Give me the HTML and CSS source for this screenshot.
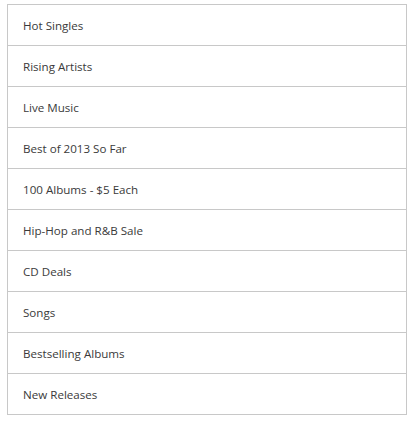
FILE: index.html
```html
<!DOCTYPE html>
<html>
<head>
<meta charset="utf-8">
<link rel="stylesheet" href="styles.css">
</head>
<body>
<ul class="list">
  <li class="item">Hot Singles</li>
  <li class="item">Rising Artists</li>
  <li class="item">Live Music</li>
  <li class="item">Best of 2013 So Far</li>
  <li class="item">100 Albums - $5 Each</li>
  <li class="item">Hip-Hop and R&amp;B Sale</li>
  <li class="item">CD Deals</li>
  <li class="item">Songs</li>
  <li class="item">Bestselling Albums</li>
  <li class="item">New Releases</li>
</ul>
</body>
</html>
```
FILE: styles.css
```css
html, body {
  margin: 0;
  padding: 0;
  background: #fff;
}
.list {
  list-style: none;
  margin: 4px 0 0 7px;
  padding: 0;
  width: 398px;
  border: 1px solid #c8c8c8;
  font-family: "Open Sans", sans-serif;
  font-size: 11.6px;
  color: #3a3a3a;
}
.item {
  height: 40px;
  display: flex;
  align-items: center;
  padding-left: 15px;
  border-top: 1px solid #c8c8c8;
}
.item:first-child {
  border-top: none;
}
```
